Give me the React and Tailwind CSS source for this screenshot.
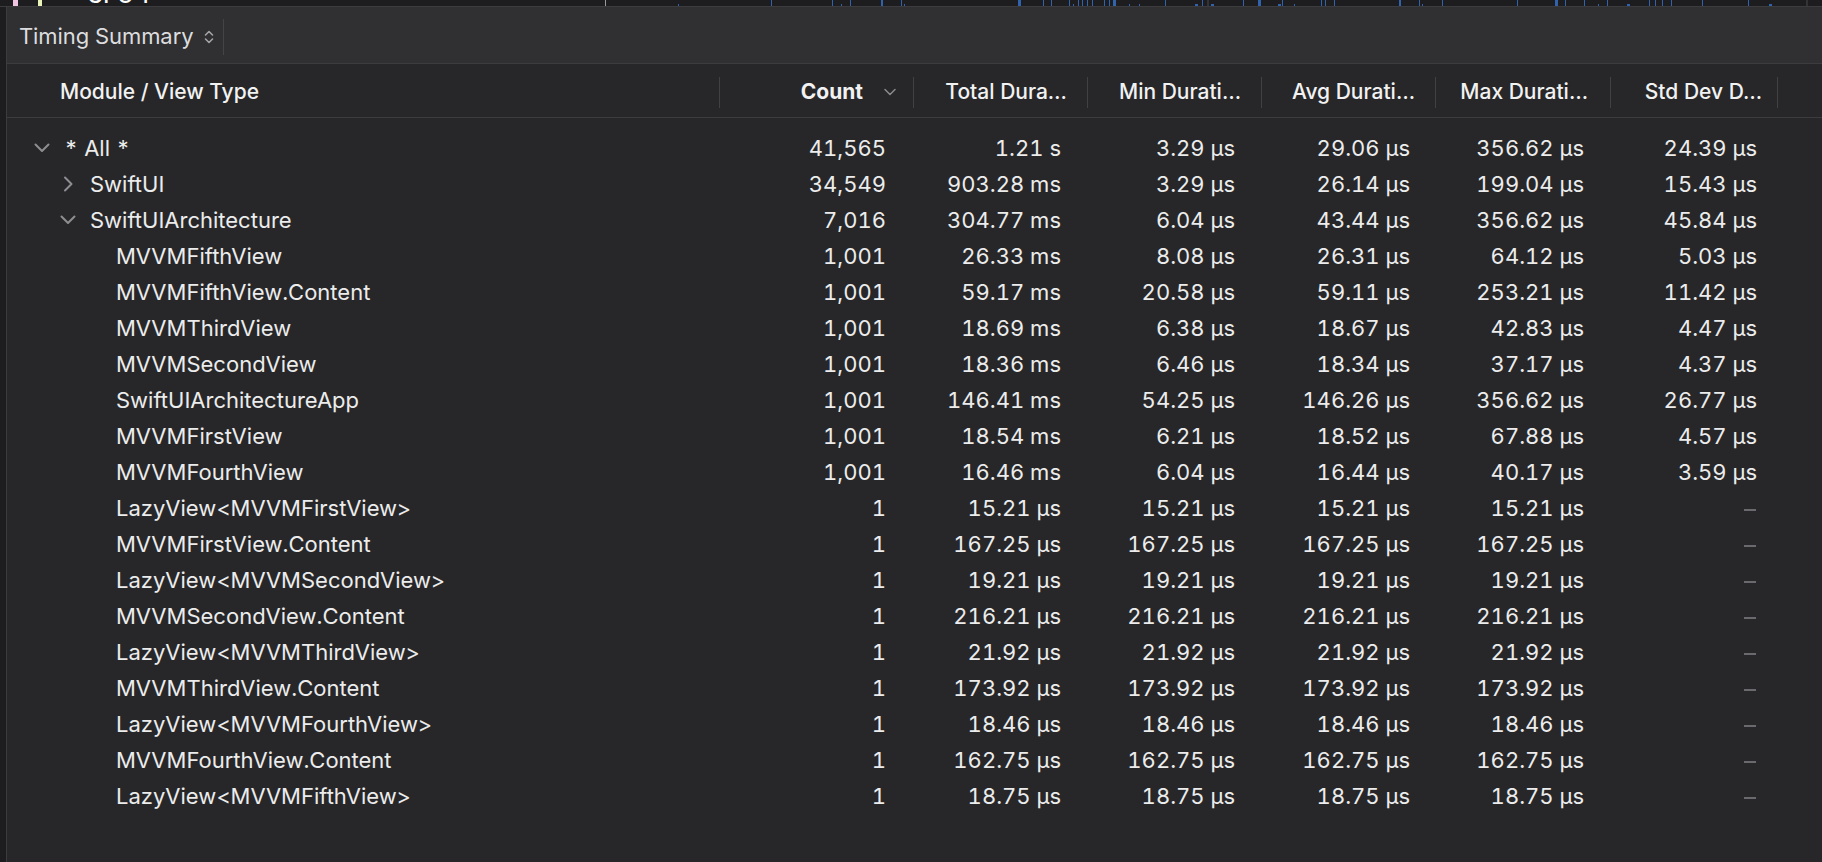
const ticks = [
  [678, 1], [771, 0], [832, 0], [841, 1], [850, 0], [881, 0, 2], [901, 0], [904, 1],
  [1018, 0, 3], [1043, 0], [1051, 0], [1069, 0], [1073, 1], [1078, 0], [1082, 0], [1087, 0],
  [1092, 0], [1104, 0], [1109, 0], [1113, 0, 3], [1129, 1], [1139, 1], [1165, 0], [1195, 1, 3],
  [1202, 0], [1211, 1, 3], [1243, 0], [1258, 0, 3], [1278, 1, 3], [1282, 0], [1294, 1],
  [1321, 0], [1325, 0], [1334, 0], [1399, 0, 2], [1419, 0], [1422, 1], [1442, 0], [1517, 0],
  [1555, 0, 3], [1565, 0], [1584, 0], [1598, 1], [1607, 0], [1627, 1, 3], [1649, 0], [1655, 0],
  [1662, 0], [1671, 0], [1702, 0], [1748, 0], [1769, 1, 3],
];

const rows = [
  { name: '* All *', level: 0, open: true, v: ['41,565', '1.21 s', '3.29 µs', '29.06 µs', '356.62 µs', '24.39 µs'] },
  { name: 'SwiftUI', level: 1, open: false, v: ['34,549', '903.28 ms', '3.29 µs', '26.14 µs', '199.04 µs', '15.43 µs'] },
  { name: 'SwiftUIArchitecture', level: 1, open: true, v: ['7,016', '304.77 ms', '6.04 µs', '43.44 µs', '356.62 µs', '45.84 µs'] },
  { name: 'MVVMFifthView', level: 2, v: ['1,001', '26.33 ms', '8.08 µs', '26.31 µs', '64.12 µs', '5.03 µs'] },
  { name: 'MVVMFifthView.Content', level: 2, v: ['1,001', '59.17 ms', '20.58 µs', '59.11 µs', '253.21 µs', '11.42 µs'] },
  { name: 'MVVMThirdView', level: 2, v: ['1,001', '18.69 ms', '6.38 µs', '18.67 µs', '42.83 µs', '4.47 µs'] },
  { name: 'MVVMSecondView', level: 2, v: ['1,001', '18.36 ms', '6.46 µs', '18.34 µs', '37.17 µs', '4.37 µs'] },
  { name: 'SwiftUIArchitectureApp', level: 2, v: ['1,001', '146.41 ms', '54.25 µs', '146.26 µs', '356.62 µs', '26.77 µs'] },
  { name: 'MVVMFirstView', level: 2, v: ['1,001', '18.54 ms', '6.21 µs', '18.52 µs', '67.88 µs', '4.57 µs'] },
  { name: 'MVVMFourthView', level: 2, v: ['1,001', '16.46 ms', '6.04 µs', '16.44 µs', '40.17 µs', '3.59 µs'] },
  { name: 'LazyView<MVVMFirstView>', level: 2, v: ['1', '15.21 µs', '15.21 µs', '15.21 µs', '15.21 µs', null] },
  { name: 'MVVMFirstView.Content', level: 2, v: ['1', '167.25 µs', '167.25 µs', '167.25 µs', '167.25 µs', null] },
  { name: 'LazyView<MVVMSecondView>', level: 2, v: ['1', '19.21 µs', '19.21 µs', '19.21 µs', '19.21 µs', null] },
  { name: 'MVVMSecondView.Content', level: 2, v: ['1', '216.21 µs', '216.21 µs', '216.21 µs', '216.21 µs', null] },
  { name: 'LazyView<MVVMThirdView>', level: 2, v: ['1', '21.92 µs', '21.92 µs', '21.92 µs', '21.92 µs', null] },
  { name: 'MVVMThirdView.Content', level: 2, v: ['1', '173.92 µs', '173.92 µs', '173.92 µs', '173.92 µs', null] },
  { name: 'LazyView<MVVMFourthView>', level: 2, v: ['1', '18.46 µs', '18.46 µs', '18.46 µs', '18.46 µs', null] },
  { name: 'MVVMFourthView.Content', level: 2, v: ['1', '162.75 µs', '162.75 µs', '162.75 µs', '162.75 µs', null] },
  { name: 'LazyView<MVVMFifthView>', level: 2, v: ['1', '18.75 µs', '18.75 µs', '18.75 µs', '18.75 µs', null] },
];

// column widths + right padding of the values
const cols = [
  { w: 'w-[194px]', pr: 'pr-[27px]' },
  { w: 'w-[174px]', pr: 'pr-[26px]' },
  { w: 'w-[174px]', pr: 'pr-[26px]' },
  { w: 'w-[174px]', pr: 'pr-[25px]' },
  { w: 'w-[175px]', pr: 'pr-[26px]' },
  { w: 'w-[167px]', pr: 'pr-[20px]' },
];

const headers = [
  { label: 'Total Dura…', pr: 'pr-[20px]' },
  { label: 'Min Durati…', pr: 'pr-[20px]' },
  { label: 'Avg Durati…', pr: 'pr-[20px]' },
  { label: 'Max Durati…', pr: 'pr-[22px]' },
  { label: 'Std Dev D…', pr: 'pr-[15px]' },
];

function Disclosure({ open }) {
  if (open) {
    return (
      <svg width="16" height="10" viewBox="0 0 16 10" fill="none">
        <path d="M1.5 1.5L8 8l6.5-6.5" stroke="#8d8d92" strokeWidth="2" strokeLinecap="round" strokeLinejoin="round" />
      </svg>
    );
  }
  return (
    <svg width="10" height="16" viewBox="0 0 10 16" fill="none">
      <path d="M2 1.5L8.5 8 2 14.5" stroke="#8d8d92" strokeWidth="2" strokeLinecap="round" strokeLinejoin="round" />
    </svg>
  );
}

function Sep() {
  return <div className="w-px h-[31px] bg-[#414143] shrink-0" />;
}

export default function App() {
  return (
    <div className="w-[1822px] h-[862px] overflow-hidden bg-[#272729] flex flex-col font-[Inter,'Noto_Sans',sans-serif] text-[#ececec]">
      {/* timeline strip */}
      <div className="relative h-[7px] shrink-0 bg-[#1d1d1f] border-b border-[#3c3c3e] overflow-hidden">
        <div className="absolute left-[13px] top-0 w-[5px] h-[6px] bg-[#f2c4e4]" />
        <div className="absolute left-[38px] top-0 w-[4px] h-[6px] bg-[#e9f2b8]" />
        <span className="absolute left-[87px] top-[-17px] text-[22px] font-medium leading-[24px] text-white">CPU 1</span>
        <svg className="absolute left-0 top-0" width="1822" height="6">
          <rect x="605" y="0" width="1" height="6" fill="#9a9a9a" />
          <rect x="1207" y="0" width="2" height="6" fill="#333335" />
          <rect x="1806" y="0" width="2" height="6" fill="#333335" />
          {ticks.map(([x, s, w], i) => (
            <rect key={i} x={x} y={s ? 4 : 0} width={w || 1} height={s ? 2 : 6} fill="#3163ad" />
          ))}
        </svg>
      </div>

      <div className="flex flex-1 min-h-0">
        {/* left gutter */}
        <div className="w-[7px] shrink-0 bg-[#1d1d1f] border-r border-[#3c3c3e]" />

        <div className="flex-1 flex flex-col min-w-0">
          {/* toolbar */}
          <div className="h-[57px] shrink-0 bg-[#303032] border-b border-[#3c3c3e] flex items-center pl-[12px] pt-[3px]">
            <span className="text-[22px] text-[#dddddf] tracking-[-0.1px]">Timing Summary</span>
            <svg className="ml-[11px]" width="10" height="16" viewBox="0 0 10 16" fill="none">
              <path d="M1.5 6L5 2.5 8.5 6M1.5 10L5 13.5 8.5 10" stroke="#a4a4a8" strokeWidth="1.6" strokeLinecap="round" strokeLinejoin="round" />
            </svg>
            <div className="ml-[9px] w-px h-[36px] bg-[#444446]" />
          </div>

          {/* column header */}
          <div className="h-[54px] shrink-0 border-b border-[#3c3c3e] flex items-center pt-[3px] text-[21px] font-medium text-[#f2f2f2]">
            <div className="w-[712px] shrink-0 pl-[53px]">Module / View Type</div>
            <div className="w-[194px] shrink-0 flex items-center">
              <Sep />
              <span className="flex-1 text-right font-bold">Count</span>
              <svg className="ml-[21px] mr-[17px]" width="12" height="8" viewBox="0 0 12 8" fill="none">
                <path d="M1 1.5L6 6.5l5-5" stroke="#8a8a8e" strokeWidth="1.5" strokeLinecap="round" strokeLinejoin="round" />
              </svg>
            </div>
            {headers.map((h, i) => (
              <div key={h.label} className={`${cols[i + 1].w} shrink-0 flex items-center`}>
                <Sep />
                <span className={`flex-1 text-right whitespace-nowrap ${h.pr}`}>{h.label}</span>
              </div>
            ))}
            <div className="flex-1 flex items-center">
              <Sep />
            </div>
          </div>

          {/* rows */}
          <div className="pt-[12px] text-[22px] tabular-nums">
            {rows.map((r) => (
              <div key={r.name} className="h-[36px] flex items-center">
                <div className="w-[712px] shrink-0 flex items-center" style={{ paddingLeft: 25 + r.level * 26 }}>
                  <div className="w-[20px] h-[20px] mr-[12px] flex items-center justify-center">
                    {r.open !== undefined && <Disclosure open={r.open} />}
                  </div>
                  <span className="whitespace-nowrap">{r.name}</span>
                </div>
                {r.v.map((val, i) => (
                  <div key={i} className={`${cols[i].w} ${cols[i].pr} shrink-0 text-right whitespace-nowrap`}>
                    {val === null ? (
                      <span className="inline-block align-middle w-[12px] h-[2px] bg-[#6a6a6e] mr-[1px]" />
                    ) : (
                      val
                    )}
                  </div>
                ))}
              </div>
            ))}
          </div>
        </div>
      </div>
    </div>
  );
}
